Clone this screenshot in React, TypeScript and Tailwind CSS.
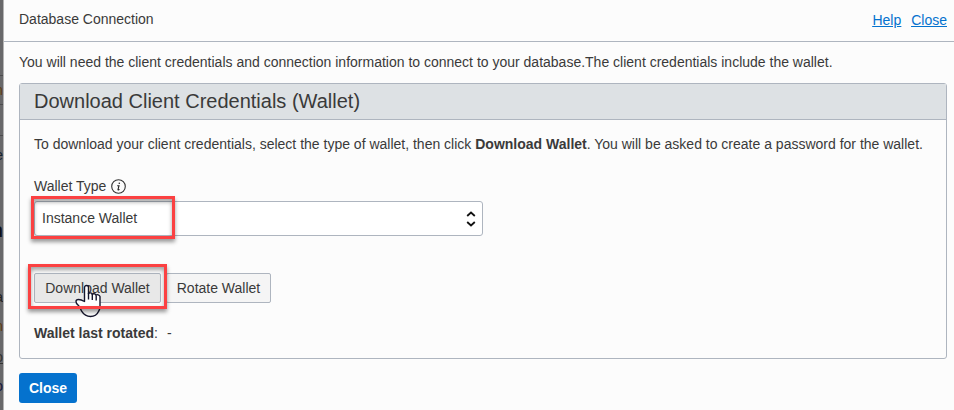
import React from "react";

function BackdropSliver() {
  return (
    <div className="flex h-[410px] w-[4px] shrink-0 flex-col items-end overflow-hidden border-r border-[#b4b4b4] bg-[#68686a] pt-[75px] text-[14px] leading-[16px]">
      <div className="flex h-[30px] w-full flex-col items-end justify-center border-y border-[#4c4c4e] text-[#5f3b12]">m</div>
      <div className="mt-[30px] flex h-[87px] w-full flex-col items-end border-t border-[#4c4c4e] pt-[11px] text-[#14202f]">e</div>
      <span className="h-[67px] text-[20px] font-bold text-[#101018]">n</span>
      <span className="h-[29px] text-[#222]">a</span>
      <span className="h-[31px] text-[#5f3b12]">n</span>
      <span className="h-[29px] text-[#333] underline">o</span>
      <span className="text-[#17173c]">o</span>
    </div>
  );
}

function InfoIcon() {
  return (
    <svg width="16" height="16" viewBox="0 0 16 16" fill="none" className="mt-[3px]">
      <circle cx="7.5" cy="7.500" r="6.800" stroke="#333" strokeWidth="1.1" />
      <path d="M6.200 6.700h1.800l-1 3.900c-.1.5.6.5 1.500-.2" stroke="#222" strokeWidth="1.1" />
      <circle cx="8.300" cy="4.300" r=".8" fill="#222" />
    </svg>
  );
}

function HandCursor() {
  return (
    <svg width="27" height="34" viewBox="0 0 27 34" className="absolute left-[41px] top-[11px]">
      <path
        d="M9.500 17.500V3.500c0-2.700 4-2.700 4 0v6.200c.4-1.200 3.300-1.100 3.800.6.600-1 3.300-.8 3.800.9.700-1 3.600-.5 3.900 1.500v10.300c0 2.500-1 3.300-1.500 4.500-1.500 3.400-4 5-8 5-4.300 0-6.500-1.500-8.500-4.800-1.500-2.500-1.800-4.500-4-6.700-2.500-2.300-3-5.500.5-5.500 2.500 0 4 .8 6 2z"
        fill="#fff"
        stroke="#15152c"
        strokeWidth="1.4"
        strokeLinejoin="round"
      />
      <path d="M13.500 9v6.500M17.300 10v6M21.200 11.500v5" stroke="#15152c" strokeWidth="1.4" />
    </svg>
  );
}

const highlight =
  "pointer-events-none absolute border-[3px] border-[#fb4142] shadow-[0_3px_4px_rgba(0,0,0,0.4),inset_0_3px_4px_rgba(0,0,0,0.35)]";

export default function App() {
  return (
    <div className="flex h-[410px] w-[954px] overflow-hidden bg-[#fcfcfc] font-['Liberation_Sans',Arial,sans-serif] text-[14px] leading-[20px] text-[#3a3a3a]">
      <BackdropSliver />
      <main className="flex min-w-0 flex-1 flex-col">
        <header className="flex h-[42px] shrink-0 justify-between border-b border-[#aeb5bf] pl-[15px] pr-[7px] pt-[9px]">
          <h1>Database Connection</h1>
          <nav className="flex gap-[10px] pt-px text-[#0572ce] underline">
            <a>Help</a>
            <a>Close</a>
          </nav>
        </header>
        <div className="flex flex-col items-start pl-[15px] pt-[10px]">
          <p className="whitespace-nowrap">
            You will need the client credentials and connection information to connect to your database.The client credentials include the wallet.
          </p>
          <section className="mt-[11px] h-[276px] w-[928px] rounded-[3px] border border-[#aeb5bf]">
            <h2 className="h-[36px] border-b border-[#aeb5bf] bg-[#dde1e4] pl-[14px] text-[20px] leading-[34px]">
              Download Client Credentials (Wallet)
            </h2>
            <div className="flex flex-col items-start pl-[14px] pt-[14px]">
              <p className="whitespace-nowrap">
                To download your client credentials, select the type of wallet, then click <b>Download Wallet</b>. You will be asked to create a password for the wallet.
              </p>
              <div className="mt-[22px] flex h-[20px] gap-[5px]">
                <span>Wallet Type</span>
                <InfoIcon />
              </div>
              <div className="relative mt-[5px] flex h-[35px] w-[449px] items-center justify-between rounded-[3px] border border-[#aeb5bf] bg-white pl-[7px] pr-[6px]">
                <span className="pb-[2px]">Instance Wallet</span>
                <svg width="10" height="18" viewBox="0 0 10 18" fill="none" stroke="#111" strokeWidth="1.8" className="mt-px">
                  <path d="M1.200 6L5 2.500 8.800 6M1.200 12L5 15.500 8.800 12" />
                </svg>
                <div className={`${highlight} -left-[4px] -top-[6px] h-[43px] w-[144px]`} />
              </div>
              <div className="relative mt-[37px] flex h-[30px] gap-[5px]">
                <button className="w-[127px] rounded-[2px] border border-[#aeb5bf] bg-[#e8e8e8]">Download Wallet</button>
                <button className="w-[105px] rounded-[2px] border border-[#aeb5bf] bg-[#f5f5f5]">Rotate Wallet</button>
                <HandCursor />
                <div className={`${highlight} -left-[6px] -top-[9px] h-[45px] w-[139px]`} />
              </div>
              <p className="mt-[20px]">
                <b>Wallet last rotated</b>:<span className="ml-[9px]">-</span>
              </p>
            </div>
          </section>
          <button className="mt-[14px] h-[30px] w-[58px] rounded-[3px] bg-[#0572ce] font-bold text-white">Close</button>
        </div>
      </main>
    </div>
  );
}
